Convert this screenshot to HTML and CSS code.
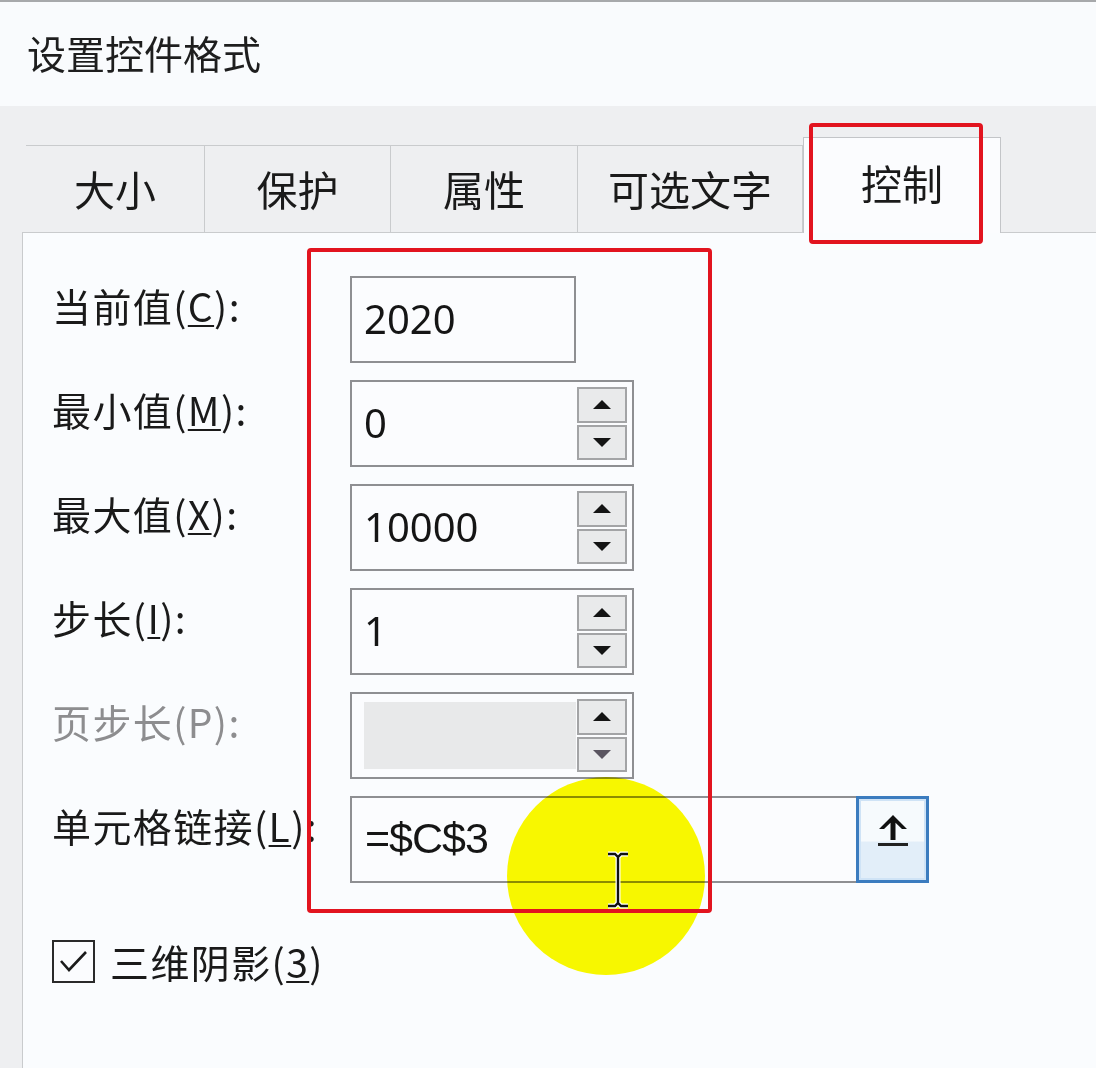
FILE: index.html
```html
<!DOCTYPE html>
<html lang="zh-CN">
<head>
<meta charset="utf-8">
<title>设置控件格式</title>
<link rel="stylesheet" href="styles.css">
</head>
<body>
<div class="dialog">
  <div class="titlebar">设置控件格式</div>
  <div class="body">
    <div class="tabs">
      <div class="tab tab-size">大小</div>
      <div class="tab tab-protect">保护</div>
      <div class="tab tab-props">属性</div>
      <div class="tab tab-alt">可选文字</div>
      <div class="tab tab-control active">控制</div>
    </div>
    <div class="panel">
      <div class="form">
        <div class="label">当前值(<u>C</u>):</div>
        <div class="field field-plain"><span class="value">2020</span></div>

        <div class="label">最小值(<u>M</u>):</div>
        <div class="field field-spin">
          <span class="value">0</span>
          <div class="spin"><div class="spin-btn up"><span class="tri-up"></span></div><div class="spin-btn down"><span class="tri-down"></span></div></div>
        </div>

        <div class="label">最大值(<u>X</u>):</div>
        <div class="field field-spin">
          <span class="value">10000</span>
          <div class="spin"><div class="spin-btn up"><span class="tri-up"></span></div><div class="spin-btn down"><span class="tri-down"></span></div></div>
        </div>

        <div class="label">步长(<u>I</u>):</div>
        <div class="field field-spin">
          <span class="value">1</span>
          <div class="spin"><div class="spin-btn up"><span class="tri-up"></span></div><div class="spin-btn down"><span class="tri-down"></span></div></div>
        </div>

        <div class="label disabled">页步长(P):</div>
        <div class="field field-spin field-disabled">
          <div class="disabled-fill"></div>
          <div class="spin"><div class="spin-btn up"><span class="tri-up"></span></div><div class="spin-btn down"><span class="tri-down dim"></span></div></div>
        </div>

        <div class="label">单元格链接(<u>L</u>):</div>
        <div class="link-row">
          <div class="field field-link"><span class="value link-value">=$C$3</span></div>
          <div class="ref-btn">
            <svg width="32" height="34" viewBox="0 0 32 34">
              <path d="M16 2 L30 16 L25 16 L18.5 9.8 L18.5 27 L13.5 27 L13.5 9.8 L7 16 L2 16 Z" fill="#111"/>
              <rect x="1" y="30" width="30" height="3" fill="#222"/>
            </svg>
          </div>
        </div>
      </div>

      <div class="check-row">
        <div class="checkbox">
          <svg width="39" height="39" viewBox="0 0 39 39"><path d="M7 19 L15 28 L32 10" fill="none" stroke="#1b1b1b" stroke-width="2.6"/></svg>
        </div>
        <span class="check-label">三维阴影(<u>3</u>)</span>
      </div>
    </div>
  </div>

  <div class="highlight"></div>
  <div class="mark mark-tab"></div>
  <div class="mark mark-fields"></div>
  <svg class="ibeam" width="30" height="60" viewBox="0 0 30 60">
    <path d="M5 4 H12 L15 7 L18 4 H25 M15 7 V53 M5 56 H12 L15 53 L18 56 H25" fill="none" stroke="#fff" stroke-width="5"/>
    <path d="M5 4 H12 L15 7 L18 4 H25 M15 7 V53 M5 56 H12 L15 53 L18 56 H25" fill="none" stroke="#111" stroke-width="2.4"/>
  </svg>
</div>
</body>
</html>
```

FILE: styles.css
```css
* { box-sizing: border-box; }

html, body {
  margin: 0;
  padding: 0;
}

body {
  width: 1096px;
  height: 1068px;
  overflow: hidden;
  background: #f9fbfd;
  font-family: "Noto Sans CJK SC", "Noto Sans", sans-serif;
  color: #1c1c1c;
}

.dialog {
  position: relative;
  width: 1096px;
  height: 1068px;
  display: flex;
  flex-direction: column;
}

.titlebar {
  height: 106px;
  flex: none;
  border-top: 2px solid #a7a9ab;
  background: #f9fbfd;
  padding-left: 27px;
  font-size: 39px;
  line-height: 100px;
  color: #1e1e1e;
}

.body {
  flex: 1;
  background: #eeeff1;
  padding-left: 22px;
  display: flex;
  flex-direction: column;
}

.tabs {
  display: flex;
  margin-top: 39px;
  margin-left: 4px;
  height: 87px;
  flex: none;
}

.tab {
  height: 87px;
  border-top: 1px solid #c9cbcd;
  border-right: 1px solid #c9cbcd;
  display: flex;
  align-items: center;
  justify-content: center;
  font-size: 41px;
  color: #1a1a1a;
  padding-bottom: 2px;
}

.tab-size { width: 179px; }
.tab-protect { width: 186px; }
.tab-props { width: 187px; }
.tab-alt { width: 225px; }

.tab.active {
  width: 198px;
  height: 96px;
  margin-top: -8px;
  margin-bottom: -1px;
  background: #fbfcfe;
  border: 1px solid #c3c5c8;
  border-bottom: none;
  position: relative;
  z-index: 2;
  padding-bottom: 8px;
}

.panel {
  flex: 1;
  background: #fafcfe;
  border-top: 1px solid #c9cbcd;
  border-left: 1px solid #c9cbcd;
  padding: 43px 0 0 29px;
}

.form {
  display: grid;
  grid-template-columns: 298px auto;
  grid-auto-rows: 87px;
  row-gap: 17px;
  align-items: start;
  justify-items: start;
}

.label {
  font-size: 39px;
  line-height: 46px;
  margin-top: 6px;
  color: #1a1a1a;
  white-space: nowrap;
  letter-spacing: 1.4px;
}

.label u {
  text-underline-offset: 3px;
  text-decoration-thickness: 2px;
}

.label.disabled {
  color: #8d8d8f;
}

.field {
  height: 87px;
  border: 2px solid #8e8f92;
  background: #fbfcfe;
  display: flex;
  align-items: center;
  position: relative;
}

.field-plain { width: 226px; }
.field-spin { width: 284px; }

.value {
  font-family: "Noto Sans", "Open Sans", sans-serif;
  font-size: 40px;
  padding-left: 12px;
  color: #151515;
  line-height: 1;
  padding-bottom: 2px;
}

.spin {
  position: absolute;
  right: 5px;
  top: 5px;
  bottom: 5px;
  width: 50px;
  display: flex;
  flex-direction: column;
  gap: 2px;
}

.spin-btn {
  flex: 1;
  background: #e9eaeb;
  border: 2px solid #a3a4a6;
  display: flex;
  align-items: center;
  justify-content: center;
}

.tri-up {
  width: 0;
  height: 0;
  border-left: 9px solid transparent;
  border-right: 9px solid transparent;
  border-bottom: 9px solid #141414;
}

.tri-down {
  width: 0;
  height: 0;
  border-left: 9px solid transparent;
  border-right: 9px solid transparent;
  border-top: 9px solid #141414;
}

.tri-down.dim { border-top-color: #5a5560; }

.disabled-fill {
  position: absolute;
  left: 12px;
  top: 8px;
  bottom: 8px;
  width: 212px;
  background: #e8e9ea;
}

.link-row {
  display: flex;
  height: 87px;
}

.field-link {
  width: 506px;
  border-right: none;
}

.link-value {
  font-family: "Liberation Sans", "Noto Sans", sans-serif;
  font-size: 43px;
  padding-left: 13px;
  letter-spacing: -1px;
}

.ref-btn {
  width: 73px;
  height: 87px;
  border: 3px solid #3b7cbf;
  box-shadow: inset 0 0 0 2px #cfe3f6;
  background: linear-gradient(#f6fafd 0%, #f6fafd 52%, #e2eef9 53%, #e2eef9 100%);
  display: flex;
  justify-content: center;
  padding-top: 14px;
}

.check-row {
  display: flex;
  align-items: center;
  margin-top: 55px;
  gap: 15px;
}

.checkbox {
  width: 43px;
  height: 43px;
  border: 2px solid #2a2a2a;
  background: #fbfcfe;
  display: flex;
  align-items: center;
  justify-content: center;
}

.check-label {
  font-size: 39px;
  line-height: 46px;
  color: #1a1a1a;
  letter-spacing: 1.4px;
}

.check-label u {
  text-underline-offset: 3px;
  text-decoration-thickness: 2px;
}

/* annotation overlays */
.highlight {
  position: absolute;
  left: 507px;
  top: 777px;
  width: 198px;
  height: 198px;
  border-radius: 50%;
  background: #fcfa00;
  mix-blend-mode: multiply;
  z-index: 5;
}

.mark {
  position: absolute;
  border: 4px solid #e2141f;
  border-radius: 4px;
  z-index: 6;
}

.mark-tab {
  left: 809px;
  top: 123px;
  width: 174px;
  height: 121px;
}

.mark-fields {
  left: 307px;
  top: 248px;
  width: 405px;
  height: 665px;
}

.ibeam {
  position: absolute;
  left: 603px;
  top: 850px;
  z-index: 7;
}
```
